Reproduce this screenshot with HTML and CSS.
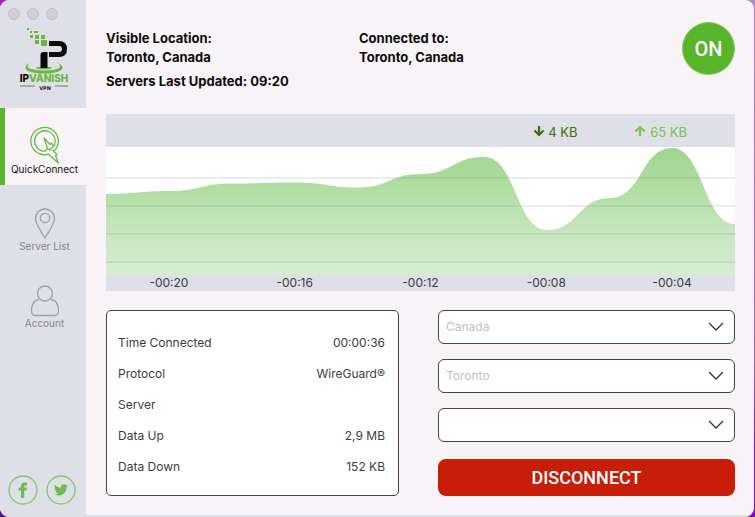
FILE: index.html
```
<!DOCTYPE html>
<html lang="en">
<head>
  <meta charset="UTF-8">
  <meta name="viewport" content="width=device-width, initial-scale=1.0">
  <title>IPVanish VPN</title>
  <link rel="stylesheet" href="styles.css">
</head>
<body>
  <div class="window">
    <aside class="sidebar">
      <div class="window-dots">
        <span></span><span></span><span></span>
      </div>
      <svg class="logo" width="54" height="64" viewBox="0 0 54 64" role="img" aria-label="IPVanish VPN">
        <g fill="#6ab83c">
          <rect x="9" y="1" width="2" height="2"/>
          <rect x="12" y="4" width="2" height="2"/>
          <rect x="16" y="4" width="4" height="2"/>
          <rect x="12" y="8" width="3" height="3"/>
          <rect x="17" y="8" width="4" height="4"/>
          <rect x="23" y="8" width="4" height="4"/>
          <rect x="17" y="13" width="4" height="4"/>
          <rect x="23" y="13" width="6" height="6"/>
          <path d="M13 36C3 39 6 46.500 26 46.500S49 39 39 36C46 39 42 43.500 26 43.500S6 39 13 36z"/>
          <ellipse cx="26" cy="41" rx="8" ry="1.500"/>
        </g>
        <path d="M31 14h10q8 0 8 8t-8 8H31v-5h10q3 0 3-3t-3-3H31z" fill="#0b0b0b"/>
        <path d="M22.500 41V28q0-3 3-3h4v16z" fill="#0b0b0b"/>
        <text class="logo-name" x="26" y="55" text-anchor="middle">IP<tspan fill="#6ab83c">VANISH</tspan></text>
        <path d="M2 59h15M37 59h13" stroke="#777" stroke-width="1"/>
        <text class="logo-sub" x="27" y="63" text-anchor="middle">VPN</text>
      </svg>
      <nav class="nav">
        <a class="nav-item active" href="#quick">
          <svg width="30" height="38" viewBox="0 0 30 38" fill="none" stroke="#62bd45" stroke-width="1.3" stroke-linejoin="round">
            <path d="M24 25A13.700 13.700 0 1 0 18.500 28.200L28.300 37L25.500 29.500L27 29L22.500 23.500"/>
            <path d="M23.500 20.500A10.200 10.200 0 1 0 15 25.200L17.500 22.500L14 12L20 18.500L21.500 17L23.500 20.500L19.500 24L17.500 22.500"/>
          </svg>
          <span>QuickConnect</span>
        </a>
        <a class="nav-item" href="#servers">
          <svg width="30" height="33" viewBox="0 0 30 33" fill="none" stroke="#a0a1a8" stroke-width="1.3">
            <path d="M15 30C11 23 5.500 16 5.500 10.500a9.500 9.500 0 0 1 19 0C24.500 16 19 23 15 30z"/>
            <circle cx="15" cy="10" r="4.700"/>
          </svg>
          <span>Server List</span>
        </a>
        <a class="nav-item" href="#account">
          <svg width="30" height="33" viewBox="0 0 30 33" fill="none" stroke="#a0a1a8" stroke-width="1.3">
            <circle cx="15" cy="8.500" r="7.500"/>
            <path d="M9 14.500C4 15 1.500 19 1.500 26q0 4.500 4 4.500h19q4 0 4-4.500c0-7-2.500-11-7.500-11.500"/>
          </svg>
          <span>Account</span>
        </a>
      </nav>
      <div class="social">
        <a href="#facebook" aria-label="Facebook">
          <svg width="30" height="30" viewBox="0 0 30 30">
            <circle cx="15" cy="15" r="14" fill="none" stroke="#84c66f" stroke-width="1.3"/>
            <path d="M13 23v-7.500h-2.500v-3H13v-1.500q0-3.500 3.500-3.500H19v3h-1.500q-1.300 0-1.300 1.300v.7H19l-.5 3h-2.300V23z" fill="#6dbb53"/>
          </svg>
        </a>
        <a href="#twitter" aria-label="Twitter">
          <svg width="30" height="30" viewBox="0 0 30 30">
            <circle cx="15" cy="15" r="14" fill="none" stroke="#84c66f" stroke-width="1.3"/>
            <path transform="translate(8 8) scale(.58)" d="M23.950 4.570a10 10 0 0 1-2.820.770 4.960 4.960 0 0 0 2.160-2.720c-.950.550-2 .950-3.130 1.180a4.920 4.920 0 0 0-8.380 4.480C7.690 8.090 4.070 6.130 1.640 3.160a4.920 4.920 0 0 0 1.520 6.570 4.900 4.900 0 0 1-2.230-.610v.060c0 2.380 1.700 4.370 3.950 4.820a5 5 0 0 1-2.210.090 4.940 4.940 0 0 0 4.600 3.420A9.870 9.870 0 0 1 0 19.540a13.990 13.990 0 0 0 7.550 2.210c9.050 0 14-7.500 14-13.980l-.020-.630a9.900 9.900 0 0 0 2.420-2.570z" fill="#6dbb53"/>
          </svg>
        </a>
      </div>
    </aside>

    <main class="main">
      <header class="status">
        <div class="status-text">
          <div>Visible Location:</div>
          <div>Toronto, Canada</div>
          <div class="updated">Servers Last Updated: 09:20</div>
        </div>
        <div class="status-text">
          <div>Connected to:</div>
          <div>Toronto, Canada</div>
        </div>
        <button class="power" type="button">ON</button>
      </header>

      <section class="chart">
        <div class="chart-head">
          <span class="down">
            <svg width="12" height="12" viewBox="0 0 12 12" fill="none" stroke="currentColor" stroke-width="2.2"><path d="M6 1v9M1.500 5.500L6 10l4.500-4.500"/></svg>
            4 KB
          </span>
          <span class="up">
            <svg width="12" height="12" viewBox="0 0 12 12" fill="none" stroke="currentColor" stroke-width="2.2"><path d="M6 11V2M1.500 6.500L6 2l4.500 4.500"/></svg>
            65 KB
          </span>
        </div>
        <svg class="plot" viewBox="0 0 629 128" preserveAspectRatio="none">
          <defs>
            <linearGradient id="area" x1="0" y1="0" x2="0" y2="1">
              <stop offset="0" stop-color="#9fd68c"/>
              <stop offset=".4" stop-color="#b5e0a9"/>
              <stop offset=".7" stop-color="#cae6c2"/>
              <stop offset="1" stop-color="#d6ecd3"/>
            </linearGradient>
          </defs>
          <path fill="url(#area)" d="M0 47C31 47 31 44 63 44S94 36.500 126 36.500S157 35.500 189 35.500S220 40.500 252 40.500S283 27 315 27S346 10 378 10C410 10 410 83 441 83S472 51 504 51S535 1 566 1S598 77 629 77V128H0z"/>
          <path fill="none" stroke="#6f8f7c" stroke-opacity=".2" stroke-width="1.5" d="M0 31H629M0 59H629M0 87H629M0 115H629"/>
        </svg>
        <div class="chart-axis">
          <span>-00:20</span>
          <span>-00:16</span>
          <span>-00:12</span>
          <span>-00:08</span>
          <span>-00:04</span>
        </div>
      </section>

      <section class="bottom">
        <div class="details">
          <table>
            <tr><th scope="row">Time Connected</th><td>00:00:36</td></tr>
            <tr><th scope="row">Protocol</th><td>WireGuard®</td></tr>
            <tr><th scope="row">Server</th><td></td></tr>
            <tr><th scope="row">Data Up</th><td>2,9 MB</td></tr>
            <tr><th scope="row">Data Down</th><td>152 KB</td></tr>
          </table>
        </div>
        <form class="picker">
          <div class="select">
            <select aria-label="Country"><option>Canada</option></select>
            <svg width="16" height="10" viewBox="0 0 16 10" fill="none" stroke="#333" stroke-width="1.3"><path d="M1 1l7 7 7-7"/></svg>
          </div>
          <div class="select">
            <select aria-label="City"><option>Toronto</option></select>
            <svg width="16" height="10" viewBox="0 0 16 10" fill="none" stroke="#333" stroke-width="1.3"><path d="M1 1l7 7 7-7"/></svg>
          </div>
          <div class="select">
            <select aria-label="Server"><option></option></select>
            <svg width="16" height="10" viewBox="0 0 16 10" fill="none" stroke="#333" stroke-width="1.3"><path d="M1 1l7 7 7-7"/></svg>
          </div>
          <button class="disconnect" type="button">DISCONNECT</button>
        </form>
      </section>
    </main>
  </div>
</body>
</html>
```
FILE: styles.css
```
* {
  box-sizing: border-box;
}
body {
  margin: 0;
  font-family: Inter, "Liberation Sans", sans-serif;
  font-size: 12px;
  color: #3c3c40;
  background: linear-gradient(#b48bc0, #a860a8 70%, #7a10b8 88%) right / 50% 100% no-repeat, linear-gradient(#a821a8, #4a109c);
}
.window {
  display: flex;
  min-height: 100vh;
  margin-right: 1px;
  border-radius: 9px;
  overflow: hidden;
  background: #f7f3f7;
}

/* sidebar */
.sidebar {
  display: flex;
  flex-direction: column;
  flex: 0 0 86px;
  background: #dedfe7;
}
.window-dots {
  display: flex;
  gap: 7px;
  padding: 8px 0 0 8px;
}
.window-dots span {
  width: 12px;
  height: 12px;
  border: 1px solid #c0bec3;
  border-radius: 50%;
  background: #d1cfd3;
}
.logo {
  margin: 7px 0 17px 18px;
}
.logo-name {
  font-size: 10px;
  font-weight: 800;
  fill: #0b0b0b;
}
.logo-sub {
  font: bold 5px "DejaVu Sans", sans-serif;
  fill: #222;
}
.nav-item {
  display: flex;
  flex-direction: column;
  align-items: center;
  justify-content: flex-end;
  height: 77px;
  padding: 0 2px 11px 0;
  border-left: 5px solid transparent;
  font-size: 10px;
  line-height: 10px;
  color: #85868d;
  text-decoration: none;
}
.nav-item.active {
  border-left-color: #5ab52d;
  background: #f7f3f7;
  color: #111;
}
.social {
  display: flex;
  gap: 8px;
  margin-top: auto;
  padding: 0 0 12px 8px;
}
.social svg {
  display: block;
}

/* main column */
.main {
  flex: 1;
  min-width: 0;
  padding: 22px 19px 19px 20px;
  border-bottom: 2px solid #dedfe7;
}
.status {
  display: flex;
  align-items: flex-start;
  height: 92px;
}
.status-text {
  flex: 0 0 253px;
  padding-top: 7px;
  font-size: 13px;
  font-weight: 700;
  line-height: 19px;
  color: #0c0c0c;
}
.updated {
  margin-top: 5px;
}
.power {
  width: 53px;
  height: 53px;
  margin-left: auto;
  padding: 0;
  border: 1px solid #7fd05a;
  border-radius: 50%;
  background: #58b42a;
  color: #fff;
  font: 500 20px Roboto, sans-serif;
}

/* traffic chart */
.chart {
  background: #dedfe7;
}
.chart-head {
  display: flex;
  justify-content: flex-end;
  gap: 57px;
  height: 33px;
  padding-right: 48px;
  font-size: 13px;
  line-height: 36px;
}
.down {
  color: #3f6d14;
}
.up {
  color: #74c551;
}
.plot {
  display: block;
  width: 100%;
  height: 128px;
  background: #fff;
}
.chart-axis {
  display: grid;
  grid-template-columns: repeat(5, 1fr);
  line-height: 16px;
  text-align: center;
}

/* details and server picker */
.bottom {
  display: grid;
  grid-template-columns: 293fr 297fr;
  gap: 39px;
  margin-top: 19px;
}
.details {
  padding: 16px 13px 13px 11px;
  border: 1px solid #444;
  border-radius: 5px;
  background: #fff;
}
table {
  width: 100%;
  border-collapse: collapse;
}
th, td {
  height: 31px;
  padding: 0;
  font-weight: 400;
  text-align: left;
}
td {
  text-align: right;
}
.picker {
  display: flex;
  flex-direction: column;
  gap: 15px;
}
.select {
  position: relative;
}
.select select {
  display: block;
  width: 100%;
  height: 34px;
  padding: 0 30px 2px 7px;
  border: 1px solid #444;
  border-radius: 6px;
  background: #fff;
  color: #bfbfc1;
  font: 12px Inter, sans-serif;
  appearance: none;
}
.select svg {
  position: absolute;
  top: 12px;
  right: 11px;
  pointer-events: none;
}
.disconnect {
  height: 37px;
  margin-top: auto;
  border: 0;
  border-radius: 8px;
  background: #c71d09;
  color: #fff;
  font: 500 18px Roboto, sans-serif;
}
```
